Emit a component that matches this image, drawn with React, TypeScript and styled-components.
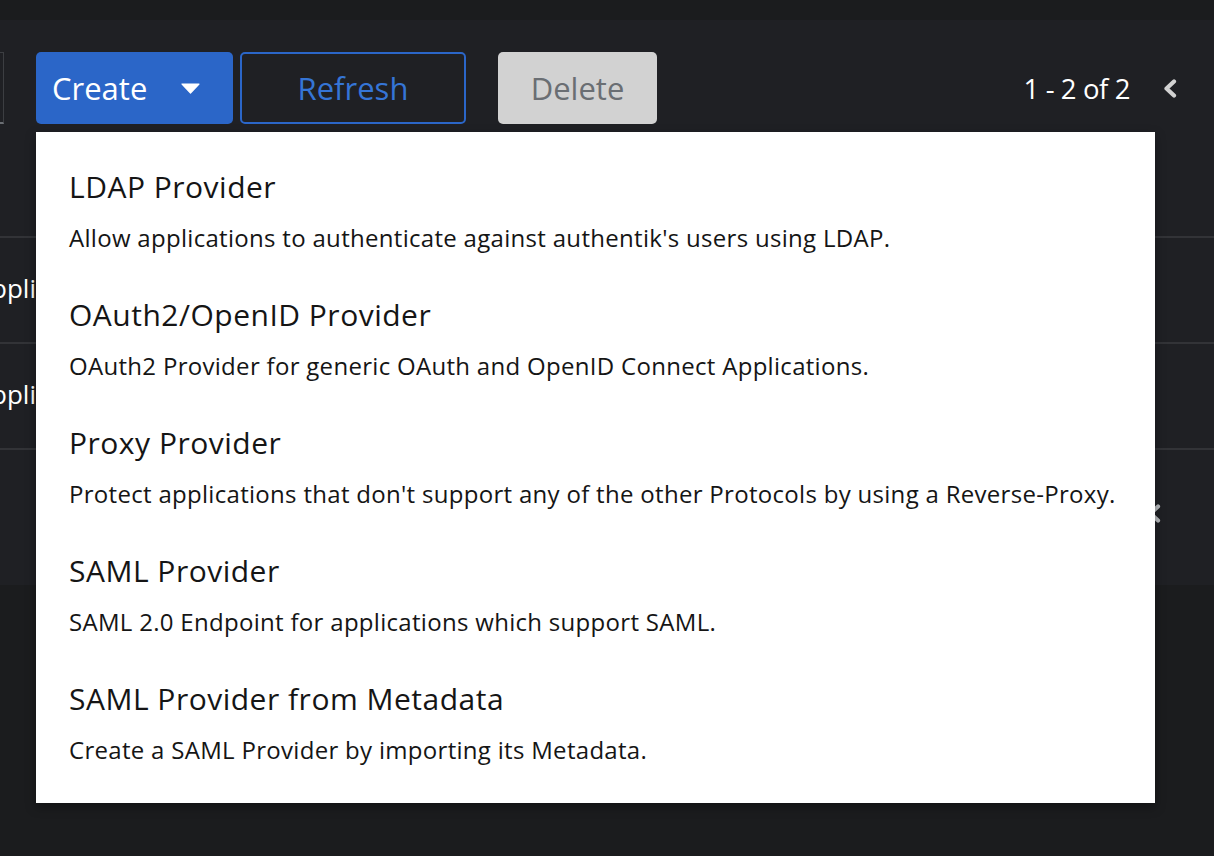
import React from "react";
import styled, { createGlobalStyle } from "styled-components";

const Global = createGlobalStyle`
  html, body { margin: 0; padding: 0; background: #1b1c1e; }
  body { font-family: "Open Sans", "Noto Sans", sans-serif; overflow: hidden; }
  * { box-sizing: border-box; }
`;

const Page = styled.div`
  width: 1214px;
  height: 856px;
  padding-top: 20px;
  background: #1b1c1e;
`;

const Card = styled.section`
  background: #1f2024;
  display: flex;
  flex-direction: column;
`;

const Toolbar = styled.div`
  display: flex;
  align-items: center;
  padding: 32px 37px 0 0;
  height: 104px;
`;

const SearchStub = styled.div`
  width: 4px;
  height: 72px;
  border: 1px solid #3c3e42;
  border-left: none;
  border-bottom: 2px solid #6a6e73;
  margin-right: 32px;
`;

const DropdownWrap = styled.div`
  position: relative;
  margin-right: 7px;
`;

const BaseButton = styled.button`
  height: 72px;
  border-radius: 5px;
  font-family: "Open Sans", "Noto Sans", sans-serif;
  font-size: 31px;
  display: flex;
  align-items: center;
  cursor: pointer;
`;

const CreateButton = styled(BaseButton)`
  width: 197px;
  background: #2b66c8;
  color: #ffffff;
  border: none;
  padding: 0 33px 0 16px;
  justify-content: space-between;
`;

const OutlineButton = styled(BaseButton)`
  width: 226px;
  background: transparent;
  color: #3575d6;
  border: 2px solid #2b66c8;
  justify-content: center;
  margin-right: 32px;
`;

const DisabledButton = styled(BaseButton)`
  width: 159px;
  background: #d2d2d2;
  color: #6a6e73;
  border: none;
  justify-content: center;
  cursor: default;
`;

const Spacer = styled.div`
  flex: 1;
`;

const Pagination = styled.div`
  display: flex;
  align-items: center;
  gap: 33px;
  color: #ffffff;
  font-size: 27.5px;
`;

const PageCount = styled.span`
  letter-spacing: -0.4px;
`;

const ChevronBox = styled.span<{ $tone?: string }>`
  display: inline-flex;
  color: ${(p) => p.$tone || "#d2d2d2"};
`;

const HeaderRow = styled.div`
  height: 114px;
  border-bottom: 2px solid #323337;
`;

const Row = styled.div`
  height: 106px;
  border-bottom: 2px solid #323337;
  display: flex;
  align-items: center;
`;

const Cell = styled.div`
  width: 36px;
  overflow: hidden;
  margin-top: -4px;
`;

const CellText = styled.span`
  display: block;
  color: #ffffff;
  font-size: 26px;
  margin-left: -9px;
  white-space: nowrap;
`;

const Footer = styled.div`
  height: 135px;
  display: flex;
  align-items: center;
  justify-content: flex-end;
  padding-right: 53px;
  padding-bottom: 8px;
`;

const Menu = styled.ul`
  position: absolute;
  top: 80px;
  left: 0;
  width: 1119px;
  margin: 0;
  padding: 16px 0 15px;
  list-style: none;
  background: #ffffff;
  box-shadow: 0 4px 10px rgba(0, 0, 0, 0.35);
  z-index: 10;
`;

const MenuItem = styled.li`
  padding: 19px 32px 22px 33px;
  height: 128px;
`;

const ItemTitle = styled.div`
  font-size: 30px;
  letter-spacing: 0.5px;
  line-height: 40px;
  color: #151515;
  white-space: nowrap;
`;

const ItemDesc = styled.div`
  font-size: 24px;
  letter-spacing: 0.3px;
  line-height: 32px;
  margin-top: 15px;
  color: #151515;
  white-space: nowrap;
`;

const Chevron = () => (
  <svg width="14" height="19" viewBox="0 0 14 19" aria-hidden="true">
    <path
      d="M11 2.5 L3.5 9.5 L11 16.5"
      fill="none"
      stroke="currentColor"
      strokeWidth="4.2"
      strokeLinecap="round"
      strokeLinejoin="round"
    />
  </svg>
);

const Caret = () => (
  <svg width="19" height="11" viewBox="0 0 19 11" aria-hidden="true">
    <path d="M1 1 L18 1 L9.5 10 Z" fill="#ffffff" stroke="#ffffff" strokeWidth="1.2" strokeLinejoin="round" />
  </svg>
);

const items = [
  {
    title: "LDAP Provider",
    desc: "Allow applications to authenticate against authentik's users using LDAP.",
  },
  {
    title: "OAuth2/OpenID Provider",
    desc: "OAuth2 Provider for generic OAuth and OpenID Connect Applications.",
  },
  {
    title: "Proxy Provider",
    desc: "Protect applications that don't support any of the other Protocols by using a Reverse-Proxy.",
  },
  {
    title: "SAML Provider",
    desc: "SAML 2.0 Endpoint for applications which support SAML.",
  },
  {
    title: "SAML Provider from Metadata",
    desc: "Create a SAML Provider by importing its Metadata.",
  },
];

export default function App() {
  return (
    <>
      <Global />
      <Page>
        <Card>
          <Toolbar>
            <SearchStub />
            <DropdownWrap>
              <CreateButton>
                <span>Create</span>
                <Caret />
              </CreateButton>
              <Menu>
                {items.map((it) => (
                  <MenuItem key={it.title}>
                    <ItemTitle>{it.title}</ItemTitle>
                    <ItemDesc>{it.desc}</ItemDesc>
                  </MenuItem>
                ))}
              </Menu>
            </DropdownWrap>
            <OutlineButton>Refresh</OutlineButton>
            <DisabledButton>Delete</DisabledButton>
            <Spacer />
            <Pagination>
              <PageCount>1 - 2 of 2</PageCount>
              <ChevronBox>
                <Chevron />
              </ChevronBox>
            </Pagination>
          </Toolbar>
          <HeaderRow />
          <Row>
            <Cell>
              <CellText>ppli</CellText>
            </Cell>
          </Row>
          <Row>
            <Cell>
              <CellText>ppli</CellText>
            </Cell>
          </Row>
          <Footer>
            <Pagination>
              <ChevronBox $tone="#b8bbbe">
                <Chevron />
              </ChevronBox>
            </Pagination>
          </Footer>
        </Card>
      </Page>
    </>
  );
}
